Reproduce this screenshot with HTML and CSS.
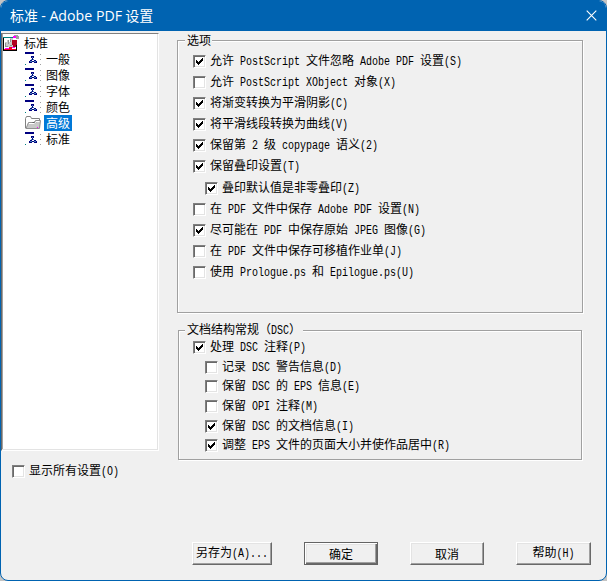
FILE: index.html
```html
<!DOCTYPE html>
<html lang="zh-CN">
<head>
<meta charset="utf-8">
<title>标准 - Adobe PDF 设置</title>
<link rel="stylesheet" href="styles.css">
</head>
<body>
<svg class="defs" width="0" height="0">
  <symbol id="check" viewBox="0 0 7 7"><path d="M0 2h1v1h1v1h1v-1h1v-1h1v-1h1v-1h1v3h-1v1h-1v1h-1v1h-1v1h-1v-1h-1v-1h-1z"/></symbol>
  <symbol id="page" viewBox="0 0 16 16">
    <path fill="#000080" d="M0 1h9v2h-9z"/>
    <path fill="#008080" d="M0 13h1v1h-1z"/>
    <path fill="#a0a0a0" d="M15 3h1v1h-1zM15 8h1v1h-1zM15 13h1v1h-1z"/>
    <path fill="#000080" d="M6 5h3v1h-3zM6 6h1v1h-1zM8 6h1v1h-1zM7 7h1v2h-1zM5 9h2v1h-2zM9 9h2v1h-2zM4 10h1v1h-1zM7 10h2v1h-2zM11 10h1v1h-1zM4 11h3v1h-3zM9 11h3v1h-3z"/>
    <path fill="#4888b8" d="M7 6h1v1h-1zM5 10h2v1h-2zM9 10h2v1h-2zM6 8h1v1h-1zM8 8h1v1h-1z"/>
  </symbol>
</svg>
<div class="window">
  <header class="titlebar">
    <span class="title">标准 <span class="title-latin">- Adobe PDF</span> 设置</span>
    <svg class="close" width="11" height="11" viewBox="0 0 11 11"><path d="M.7 .7L10.3 10.3M10.3 .7L.7 10.3"/></svg>
  </header>
  <main class="content">
    <div class="side">
      <ul class="tree">
        <li class="root">
          <svg width="16" height="16" viewBox="0 0 16 16" shape-rendering="crispEdges">
            <path fill="#fff" d="M1 3h13v11h-13z"/><path fill="#008080" d="M0 2h10v1h-10z"/>
            <path fill="#000" d="M0 3h1v12h-1zM13 5h1v11h-1zM0 15h14v1h-14z"/>
            <path fill="#c8c8c8" d="M2 7h2v-2h2v2h1v-4h3v9h-7v-2h-1z"/>
            <path fill="#909090" d="M2 8h1v3h2v1h-3zM5 5h1v4h-1zM7 4h1v3h-1zM7 10h2v1h-2z"/>
            <path fill="#b00020" d="M9 5h5v5h-1v2h-3v-2h-1z"/><path fill="#a0a0a0" d="M11 0h4v1h1v3h-3v-1h-2z"/>
            <path fill="#f0f" d="M10 1h3v2h-3zM2 13h4v1h-4zM9 12h3v1h-3z"/><path fill="#f00020" d="M1 14h12v1h-12zM6 12h3v2h-3z"/>
          </svg><span>标准</span></li>
        <li><svg width="16" height="16" shape-rendering="crispEdges"><use href="#page"/></svg><span>一般</span></li>
        <li><svg width="16" height="16" shape-rendering="crispEdges"><use href="#page"/></svg><span>图像</span></li>
        <li><svg width="16" height="16" shape-rendering="crispEdges"><use href="#page"/></svg><span>字体</span></li>
        <li><svg width="16" height="16" shape-rendering="crispEdges"><use href="#page"/></svg><span>颜色</span></li>
        <li class="selected">
          <svg width="16" height="16" viewBox="0 0 16 16">
            <path fill="#fff" stroke="#808080" d="M.5 13V3.500L1.500 1.500H5.500L6.500 3.500H14.500V12.500L13.500 13.500H1z"/>
            <path fill="#c8c8c8" stroke="#909090" d="M1 13.500L3.500 7.500H9L10.500 5.500H15.500L14.500 13.500z"/>
            <path stroke="#fff" d="M4 8.500H9.500L11 6.500H14.500"/><path fill="#f0f" d="M12 12h1v1h-1z"/>
          </svg><span>高级</span></li>
        <li><svg width="16" height="16" shape-rendering="crispEdges"><use href="#page"/></svg><span>标准</span></li>
      </ul>
      <div class="option show-all"><i class="box"></i><span>显示所有设置<b>(O)</b></span></div>
    </div>
    <div class="groups">
      <section class="group general">
        <h2><span>选项</span></h2>
        <div class="option"><i class="box"><svg><use href="#check"/></svg></i><span>允许<b> PostScript </b>文件忽略<b> Adobe PDF </b>设置<b>(S)</b></span></div>
        <div class="option"><i class="box"></i><span>允许<b> PostScript XObject </b>对象<b>(X)</b></span></div>
        <div class="option"><i class="box"><svg><use href="#check"/></svg></i><span>将渐变转换为平滑阴影<b>(C)</b></span></div>
        <div class="option"><i class="box"><svg><use href="#check"/></svg></i><span>将平滑线段转换为曲线<b>(V)</b></span></div>
        <div class="option"><i class="box"><svg><use href="#check"/></svg></i><span>保留第<b> 2 </b>级<b> copypage </b>语义<b>(2)</b></span></div>
        <div class="option"><i class="box"><svg><use href="#check"/></svg></i><span>保留叠印设置<b>(T)</b></span></div>
        <div class="option nested"><i class="box"><svg><use href="#check"/></svg></i><span>叠印默认值是非零叠印<b>(Z)</b></span></div>
        <div class="option"><i class="box"></i><span>在<b> PDF </b>文件中保存<b> Adobe PDF </b>设置<b>(N)</b></span></div>
        <div class="option"><i class="box"><svg><use href="#check"/></svg></i><span>尽可能在<b> PDF </b>中保存原始<b> JPEG </b>图像<b>(G)</b></span></div>
        <div class="option"><i class="box"></i><span>在<b> PDF </b>文件中保存可移植作业单<b>(J)</b></span></div>
        <div class="option"><i class="box"></i><span>使用<b> Prologue.ps </b>和<b> Epilogue.ps(U)</b></span></div>
      </section>
      <section class="group dsc">
        <h2><span>文档结构常规（<b>DSC</b>）</span></h2>
        <div class="option"><i class="box"><svg><use href="#check"/></svg></i><span>处理<b> DSC </b>注释<b>(P)</b></span></div>
        <div class="option nested"><i class="box"></i><span>记录<b> DSC </b>警告信息<b>(D)</b></span></div>
        <div class="option nested"><i class="box"></i><span>保留<b> DSC </b>的<b> EPS </b>信息<b>(E)</b></span></div>
        <div class="option nested"><i class="box"></i><span>保留<b> OPI </b>注释<b>(M)</b></span></div>
        <div class="option nested"><i class="box"><svg><use href="#check"/></svg></i><span>保留<b> DSC </b>的文档信息<b>(I)</b></span></div>
        <div class="option nested"><i class="box"><svg><use href="#check"/></svg></i><span>调整<b> EPS </b>文件的页面大小并使作品居中<b>(R)</b></span></div>
      </section>
    </div>
  </main>
  <footer class="actions">
    <button class="save">另存为<b>(A)...</b></button>
    <button class="default">确定</button>
    <button>取消</button>
    <button class="help">帮助<b>(H)</b></button>
  </footer>
</div>
</body>
</html>
```
FILE: styles.css
```css
* { box-sizing: border-box; }
body {
  margin: 0;
  background: #c4c4c4;
  color: #000;
  font: 12px/16px "Noto Sans CJK SC", sans-serif;
}
.defs { position: absolute; }
.window {
  display: flex;
  flex-direction: column;
  width: 607px;
  height: 581px;
  overflow: hidden;
  background: #f0f0f0;
  border: 1px solid #0063b1;
  border-radius: 8px;
}
.titlebar {
  display: flex;
  flex: none;
  align-items: center;
  justify-content: space-between;
  height: 30px;
  padding: 0 9px 2px 9px;
  background: #0063b1;
  color: #fff;
}
.title { font-size: 14px; line-height: 20px; white-space: pre; }
.title-latin { font-family: "Open Sans", sans-serif; font-size: 14.2px; }
.close { stroke: #fff; stroke-width: 1.1; }

/* half-width characters occupy exactly half of a CJK cell */
b {
  display: inline-block;
  font: 10px/16px "Liberation Mono", monospace;
  white-space: pre;
  transform: scaleY(1.2);
}
.content { display: flex; flex: none; height: 449px; }
.side { flex: none; width: 176px; }
.tree {
  width: 158px;
  height: 418px;
  margin: 2px 0 0;
  padding: 1px 0 0;
  list-style: none;
  background: #fff;
  border: 1px solid;
  border-color: #808080 #fff #fff #696969;
  box-shadow: inset -1px -1px #e3e3e3, inset 1px 0 #a0a0a0;
}
.tree li { display: flex; gap: 3px; height: 16px; padding-left: 23px; }
.tree li svg { flex: none; }
.tree li span { padding: 0 2px; white-space: nowrap; }
.tree .root { padding-left: 1px; }
.tree .selected span { background: #0078d7; color: #fff; }

.option { display: flex; align-items: center; height: 21px; padding-left: 15px; white-space: nowrap; }
.option > span { margin-left: 4px; line-height: 16px; }
.nested { padding-left: 27px; }
.box {
  flex: none;
  width: 13px;
  height: 13px;
  background: #fff;
  border: 1px solid;
  border-color: #808080 #fff #fff #808080;
  box-shadow: inset 1px 1px #696969, inset -1px -1px #e3e3e3;
}
.box svg { display: block; width: 7px; height: 7px; margin: 2px; shape-rendering: crispEdges; }
.show-all { margin-top: 10px; padding-left: 11px; }

.groups { flex: none; padding-top: 9px; }
.group {
  border: 1px solid #a0a0a0;
  box-shadow: 1px 1px #fff, inset 1px 1px #fff;
}
.group h2 { height: 10px; margin: 0; font: inherit; }
.group h2 span {
  display: block;
  width: max-content;
  height: 15px;
  margin-left: 7px;
  padding: 0 1px 0 2px;
  background: #f0f0f0;
  line-height: 16px;
  transform: translateY(-9px);
}
.general { width: 406px; height: 273px; }
.general .nested { height: 22px; }
.dsc { width: 404px; height: 130px; margin: 17px 0 0 1px; }
.dsc h2 { height: 7px; }
.dsc h2 span { margin-left: 6px; padding-right: 2px; transform: translateY(-10px); }
.dsc .option { height: 19.600px; padding-left: 14px; }
.dsc .nested { padding-left: 26px; }

.actions { display: flex; margin: 62px 0 0 191px; }
.actions button {
  width: 74px;
  height: 23px;
  margin: 0 32px 0 0;
  padding: 0;
  background: #f0f0f0;
  border: 1px solid;
  border-color: #fff #696969 #696969 #fff;
  box-shadow: inset -1px -1px #a0a0a0, inset 1px 1px #e3e3e3;
  color: #000;
  font: inherit;
}
.actions .save { width: 80px; }
.actions .help { width: 75px; margin: 0; }
.actions .default {
  border-color: #646464;
  box-shadow: inset 1px 1px #fff, inset -1px -1px #696969, inset -2px -2px #a0a0a0, inset 2px 2px #e3e3e3;
}
```
